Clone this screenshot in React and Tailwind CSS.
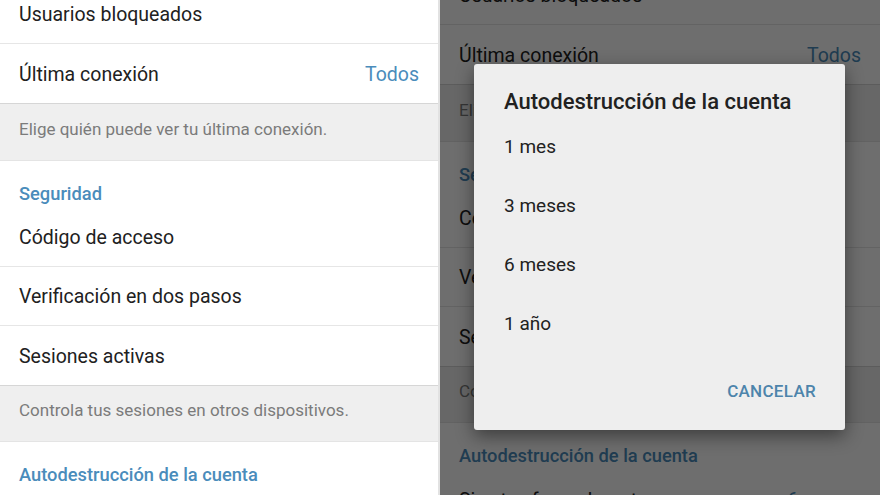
import React from "react";

const font = { fontFamily: "Roboto, 'Noto Sans', sans-serif" };

function Row({ label, value, divider }) {
  return (
    <div
      className={`flex h-[59px] items-center justify-between px-[19px] ${
        divider ? "border-b border-[#e6e6e6]" : ""
      }`}
    >
      <span className="pt-[2px] text-[19.5px] leading-[22px] text-[#212121]">{label}</span>
      {value && <span className="pt-[2px] text-[19.5px] leading-[22px] text-[#4a8cbb]">{value}</span>}
    </div>
  );
}

function Header({ children }) {
  return (
    <div className="px-[19px] pt-[23px] pb-[4px] text-[18.3px] font-medium leading-[20px] text-[#4a8cbb]">
      {children}
    </div>
  );
}

function Hint({ children, top }) {
  return (
    <div
      className={`border-t border-b border-t-[#d6d6d6] border-b-[#e4e4e4] bg-[#efefef] px-[19px] pb-[21px] text-[17px] leading-[19px] text-[#7b7b7b] ${top}`}
    >
      {children}
    </div>
  );
}

function Screen() {
  return (
    <div className="bg-white">
      <Row label="Usuarios bloqueados" divider />
      <Row label="Última conexión" value="Todos" />
      <Hint top="pt-[16px]">Elige quién puede ver tu última conexión.</Hint>
      <Header>Seguridad</Header>
      <Row label="Código de acceso" divider />
      <Row label="Verificación en dos pasos" divider />
      <Row label="Sesiones activas" />
      <Hint top="pt-[15px]">Controla tus sesiones en otros dispositivos.</Hint>
      <Header>Autodestrucción de la cuenta</Header>
      <Row label="Si estoy fuera durante" value="6 meses" />
    </div>
  );
}

export default function App() {
  const options = ["1 mes", "3 meses", "6 meses", "1 año"];

  return (
    <div className="flex h-[495px] w-[880px] overflow-hidden bg-white" style={font}>
      <div className="h-full w-[440px] overflow-hidden border-r-2 border-[#e2e2e2]">
        <div className="mt-[-15px]">
          <Screen />
        </div>
      </div>

      <div className="relative h-full w-[440px] overflow-hidden">
        <div className="mt-[-34px]">
          <Screen />
        </div>
        <div className="absolute inset-0 bg-black/[0.57]" />

        <div className="absolute left-[34px] top-[64px] w-[371px] rounded-[3px] bg-[#eeeeee] shadow-[0_6px_18px_rgba(0,0,0,0.45)]">
          <div className="px-[30px] pt-[25px] pb-[3px] text-[22px] font-medium leading-[25px] text-[#212121]">
            Autodestrucción de la cuenta
          </div>
          {options.map((o) => (
            <div key={o} className="flex h-[59px] items-center px-[30px] pt-[2px] text-[19px] text-[#212121]">
              {o}
            </div>
          ))}
          <div className="flex h-[77px] items-center justify-end pr-[29px]">
            <span className="text-[17px] font-medium tracking-[0.3px] text-[#4d84ab]">CANCELAR</span>
          </div>
        </div>
      </div>
    </div>
  );
}
